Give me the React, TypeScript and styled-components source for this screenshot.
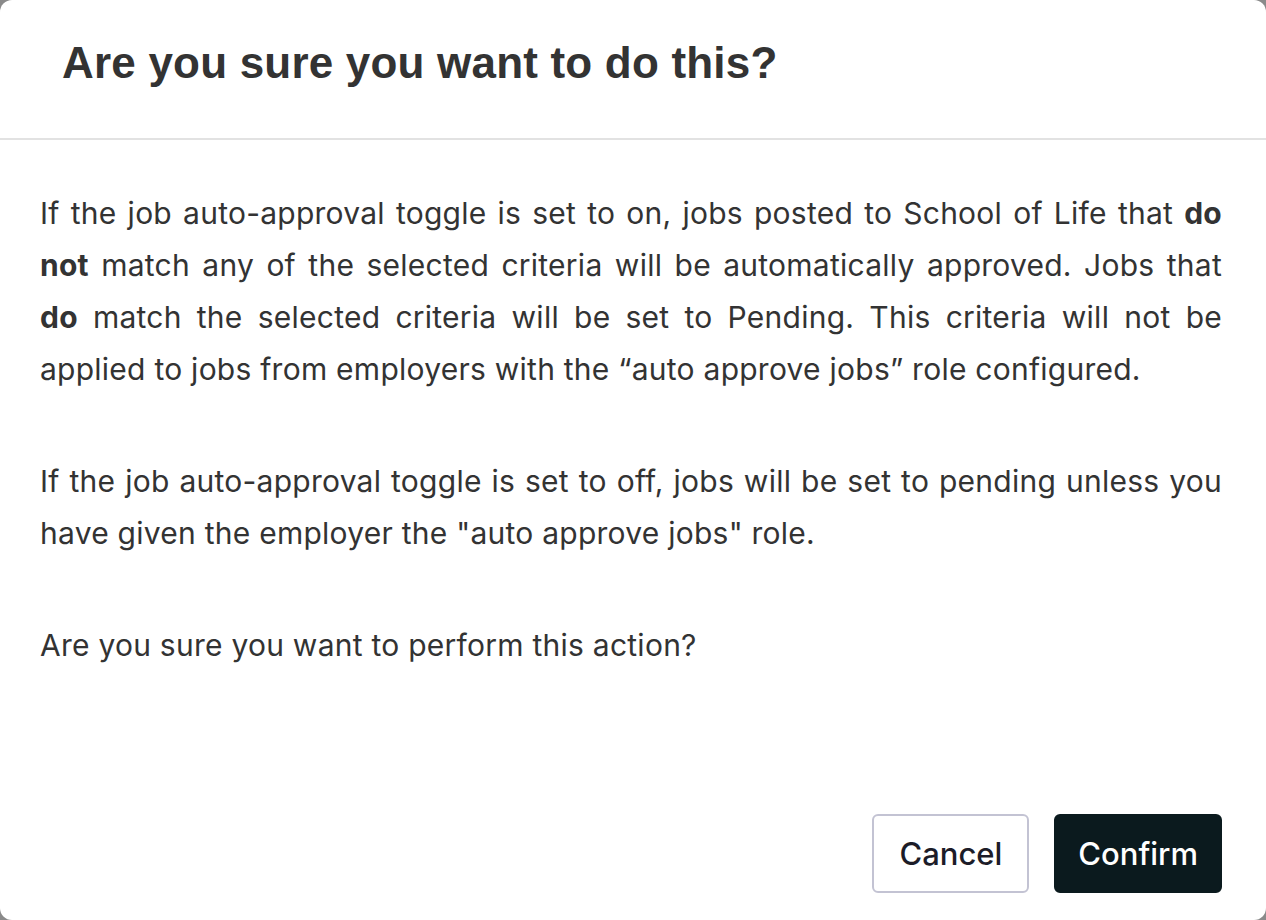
import styled, { createGlobalStyle } from 'styled-components';

const GlobalStyle = createGlobalStyle`
  html, body {
    margin: 0;
    padding: 0;
    background: #8a8a8a;
  }
  * {
    box-sizing: border-box;
  }
`;

const Dialog = styled.div`
  width: 1266px;
  height: 920px;
  background: #ffffff;
  border-radius: 12px;
  display: flex;
  flex-direction: column;
  overflow: hidden;
`;

const Header = styled.header`
  padding: 37px 62px 49px;
  border-bottom: 2px solid #e2e2e2;
`;

const Title = styled.h1`
  margin: 0;
  font-family: 'Liberation Sans', Arial, sans-serif;
  font-size: 44px;
  line-height: 52px;
  font-weight: 700;
  letter-spacing: 0.2px;
  color: #333333;
`;

const Content = styled.div`
  flex: 1;
  padding: 47px 44px 0 40px;
  display: flex;
  flex-direction: column;
  gap: 60px;
`;

const Paragraph = styled.p`
  margin: 0;
  font-family: Inter, 'Noto Sans', sans-serif;
  font-size: 30px;
  line-height: 52px;
  letter-spacing: 0.25px;
  color: #333333;
  text-align: justify;

  strong {
    font-weight: 700;
  }
`;

const Footer = styled.footer`
  display: flex;
  justify-content: flex-end;
  gap: 25px;
  padding: 0 44px 27px;
`;

const Button = styled.button<{ $primary?: boolean }>`
  height: 79px;
  padding: 0 ${({ $primary }) => ($primary ? '22px' : '25px')};
  border-radius: 6px;
  font-family: Inter, 'Noto Sans', sans-serif;
  font-size: 31px;
  font-weight: 500;
  cursor: pointer;
  border: 2px solid ${({ $primary }) => ($primary ? '#0b1a1e' : '#c3c3d3')};
  background: ${({ $primary }) => ($primary ? '#0b1a1e' : '#ffffff')};
  color: ${({ $primary }) => ($primary ? '#ffffff' : '#1c1c28')};
`;

export default function App() {
  return (
    <>
      <GlobalStyle />
      <Dialog>
        <Header>
          <Title>Are you sure you want to do this?</Title>
        </Header>
        <Content>
          <Paragraph>
            If the job auto-approval toggle is set to on, jobs posted to School of Life that{' '}
            <strong>do not</strong> match any of the selected criteria will be automatically
            approved. Jobs that <strong>do</strong> match the selected criteria will be set to
            Pending. This criteria will not be applied to jobs from employers with the “auto
            approve jobs” role configured.
          </Paragraph>
          <Paragraph>
            If the job auto-approval toggle is set to off, jobs will be set to pending unless you
            have given the employer the "auto approve jobs" role.
          </Paragraph>
          <Paragraph>Are you sure you want to perform this action?</Paragraph>
        </Content>
        <Footer>
          <Button>Cancel</Button>
          <Button $primary>Confirm</Button>
        </Footer>
      </Dialog>
    </>
  );
}
